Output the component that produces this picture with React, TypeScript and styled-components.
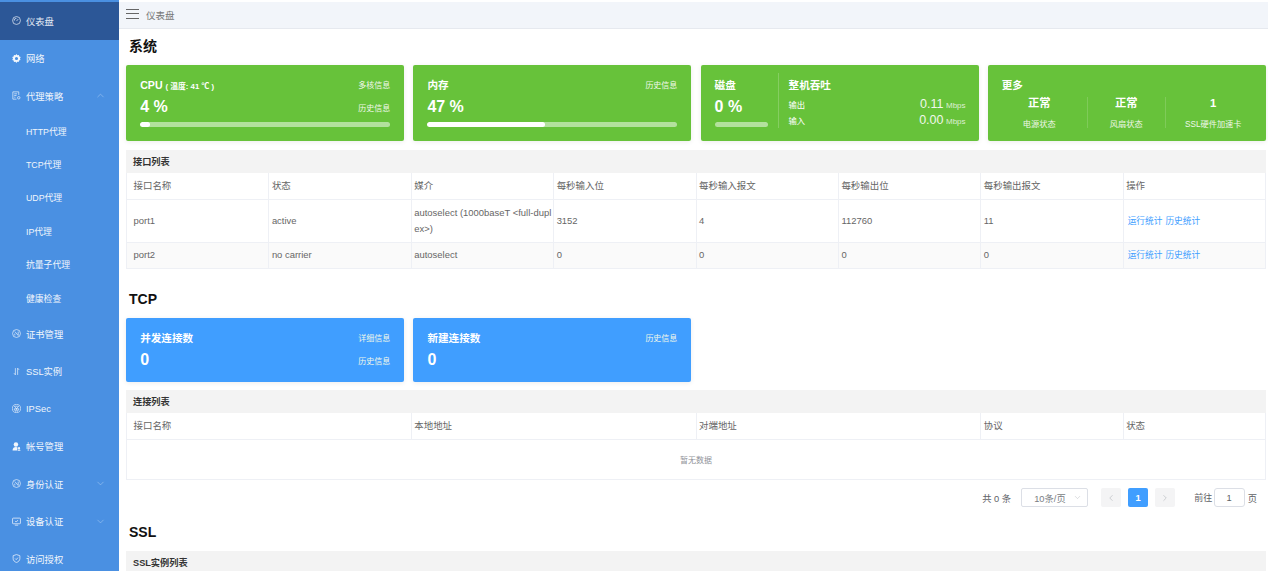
import React from 'react';
import styled, { createGlobalStyle } from 'styled-components';
import { ChevronDown, ChevronLeft, ChevronRight, ChevronUp } from 'lucide-react';

const GlobalStyle = createGlobalStyle`
  html, body {
    margin: 0;
    padding: 0;
    height: 571px;
    overflow: hidden;
    background: #fff;
    font-family: "Liberation Sans", "Noto Sans CJK SC", sans-serif;
  }
  * { box-sizing: border-box; }
`;

const Shell = styled.div`
  display: flex;
  width: 1268px;
  height: 571px;
  overflow: hidden;
`;

const Sidebar = styled.nav`
  flex: 0 0 119px;
  background: #4a90e2;
  color: #fff;
  display: flex;
  flex-direction: column;
  padding-top: 2px;
  overflow: hidden;
`;

const NavItem = styled.div<{ $active?: boolean }>`
  flex: 0 0 37.5px;
  display: flex;
  align-items: center;
  padding: 0 13px 0 12px;
  gap: 5px;
  font-size: 9.3px;
  background: ${(p) => (p.$active ? '#2c5797' : 'transparent')};
  color: ${(p) => (p.$active ? '#e4ebf5' : '#f1f6fc')};
  svg.lead { flex: 0 0 9px; width: 9px; height: 9px; }
`;

const NavLabel = styled.span`
  flex: 1;
`;

const SubItem = styled.div`
  flex: 0 0 33.4px;
  display: flex;
  align-items: center;
  padding-left: 26px;
  font-size: 8.8px;
  color: #f1f6fc;
`;

const Main = styled.main`
  flex: 1;
  min-width: 0;
  padding-top: 2px;
  overflow: hidden;
`;

const TopBar = styled.header`
  height: 27px;
  background: #f2f5fa;
  border-bottom: 1px solid #e6e9ef;
  display: flex;
  align-items: center;
  padding-left: 7px;
  gap: 7px;
  font-size: 9.5px;
  color: #777;
`;

const Burger = styled.div`
  width: 13px;
  height: 10px;
  border-top: 1.5px solid #666;
  border-bottom: 1.5px solid #666;
  position: relative;
  margin-top: -2px;
  &::after {
    content: '';
    position: absolute;
    left: 0;
    right: 0;
    top: 2.75px;
    border-top: 1.5px solid #666;
  }
`;

const Content = styled.div`
  padding: 0 2px 0 7px;
`;

const SectionTitle = styled.h2<{ $top: number; $bottom: number }>`
  margin: ${(p) => p.$top}px 0 ${(p) => p.$bottom}px 3px;
  height: 18px;
  line-height: 18px;
  font-size: 14px;
  font-weight: 700;
  color: #111;
`;

const CardRow = styled.div`
  display: grid;
  grid-template-columns: repeat(4, 278px);
  column-gap: 9.2px;
  padding-left: 0.2px;
`;

const Card = styled.div<{ $color: string; $height: number }>`
  background: ${(p) => p.$color};
  height: ${(p) => p.$height}px;
  border-radius: 2px;
  box-shadow: 0 1px 5px rgba(0, 0, 0, 0.08);
  color: #fff;
`;

const StatCard = styled(Card)`
  padding: 8px 14px;
  display: flex;
  flex-direction: column;
`;

const StatRow = styled.div`
  display: flex;
  justify-content: space-between;
  align-items: center;
  height: 23px;
`;

const StatHeading = styled.span`
  font-size: 10.6px;
  font-weight: 700;
`;

const Small = styled.span`
  font-size: 7.8px;
  font-weight: 700;
`;

const Big = styled.span`
  font-size: 16px;
  font-weight: 700;
  margin-top: -1px;
`;

const Link = styled.span`
  font-size: 8px;
  color: #f0f8ea;
`;

const Track = styled.div`
  margin-top: 3px;
  height: 5px;
  width: 100%;
  border-radius: 3px;
  background: rgba(255, 255, 255, 0.5);
  overflow: hidden;
`;

const Fill = styled.div<{ $percent: number }>`
  height: 100%;
  width: ${(p) => p.$percent}%;
  background: #fff;
  border-radius: 3px;
`;

const SplitCard = styled(Card)`
  display: flex;
  padding: 8px 13px 13px 14px;
`;

const DiskColumn = styled.div`
  flex: 0 0 64px;
  padding-right: 10px;
  display: flex;
  flex-direction: column;
  border-right: 1px solid rgba(255, 255, 255, 0.2);
`;

const ThroughputColumn = styled.div`
  flex: 1;
  padding-left: 10px;
`;

const ThroughputRow = styled.div`
  display: flex;
  justify-content: space-between;
  align-items: center;
  height: 16px;
  font-size: 8.3px;
`;

const Rate = styled.span`
  font-size: 12.5px;
  color: #f0f8ea;
  small { font-size: 8px; margin-left: 2.5px; opacity: 0.85; }
`;

const MoreCard = styled(Card)`
  padding: 8px 14px 0;
`;

const MoreHeading = styled(StatHeading)`
  display: block;
  height: 24px;
  line-height: 24px;
`;

const MoreGrid = styled.div`
  display: grid;
  grid-template-columns: 96px 78px 95px;
  margin-left: -10px;
`;

const MoreCell = styled.div`
  display: flex;
  flex-direction: column;
  align-items: center;
  height: 31px;
  border-right: 1px solid rgba(255, 255, 255, 0.16);
  &:last-child { border-right: none; }
  b { font-size: 11.3px; line-height: 13px; }
  span { font-size: 8.2px; line-height: 10px; margin-top: 10px; color: #eef7e8; }
`;

const TableBlock = styled.section<{ $top: number }>`
  margin-top: ${(p) => p.$top}px;
  width: 1140px;
`;

const TableTitle = styled.div`
  height: 23px;
  line-height: 24px;
  padding-left: 7px;
  background: #f3f3f3;
  font-size: 9.2px;
  font-weight: 700;
  color: #333;
`;

const Table = styled.table`
  width: 100%;
  border-collapse: collapse;
  table-layout: fixed;
  font-size: 9.45px;
  color: #666;
  border-left: 1px solid #eef0f5;
  border-right: 1px solid #eef0f5;
`;

const Column = styled.col<{ $width: string }>`
  width: ${(p) => p.$width};
`;

const Cell = styled.td<{ $height?: number }>`
  height: ${(p) => p.$height || 26}px;
  padding: 0 0 0 2.5px;
  border-right: 1px solid #eef0f5;
  border-bottom: 1px solid #eef0f5;
  line-height: 16px;
  word-break: break-all;
  &:first-child { padding-left: 6.5px; }
`;

const Row = styled.tr<{ $striped?: boolean }>`
  background: ${(p) => (p.$striped ? '#fafafa' : '#fff')};
`;

const LinkGroup = styled.div`
  display: flex;
  gap: 3px;
  margin-left: 1.5px;
`;

const TableLink = styled.a`
  color: #409eff;
  font-size: 8.7px;
`;

const Empty = styled.div`
  height: 40px;
  display: flex;
  align-items: center;
  justify-content: center;
  font-size: 8px;
  color: #909399;
  border: 1px solid #eef0f5;
  border-top: none;
`;

const Pagination = styled.div`
  display: flex;
  justify-content: flex-end;
  align-items: center;
  height: 19px;
  margin-top: 8px;
  padding-right: 9px;
  font-size: 9.3px;
  color: #606266;
`;

const PageSize = styled.div`
  width: 67px;
  height: 19px;
  margin: 0 13px 0 10px;
  border: 1px solid #dcdfe6;
  border-radius: 2px;
  display: flex;
  align-items: center;
  justify-content: space-between;
  padding: 0 5px 0 12px;
  color: #7a7d83;
  svg { color: #b4b7bd; }
`;

const PageButton = styled.div<{ $current?: boolean }>`
  width: 20px;
  height: 19px;
  margin-right: 7px;
  border-radius: 2px;
  display: flex;
  align-items: center;
  justify-content: center;
  font-weight: 700;
  background: ${(p) => (p.$current ? '#409eff' : '#f4f4f5')};
  color: ${(p) => (p.$current ? '#fff' : '#b0b3b9')};
`;

const GotoLabel = styled.span`
  margin-left: 12px;
  font-size: 9px;
`;

const Jump = styled.div`
  width: 31px;
  height: 19px;
  margin: 0 3px 0 1.5px;
  border: 1px solid #dcdfe6;
  border-radius: 3px;
  display: flex;
  align-items: center;
  justify-content: center;
`;

const Gauge = () => (
  <svg className="lead" viewBox="0 0 16 16" fill="none" stroke="currentColor" strokeWidth="1.3">
    <circle cx="8" cy="8" r="7" />
    <path d="M8 9l3-3.500M3.800 8.500a4.200 4.200 0 0 1 4.200-4.500" />
  </svg>
);

const Gear = () => (
  <svg className="lead" viewBox="0 0 16 16" fill="currentColor">
    <path
      fillRule="evenodd"
      d="M8 0l1.600 2.200 2.700-.5.6 2.700 2.600 1L14.200 8l.9 2.600-2.600 1-.6 2.700-2.700-.5L8 16l-1.800-2.200-2.700.5-.6-2.700-2.600-1L1.800 8 .3 5.400l2.600-1 .6-2.700 2.700.5L8 0zm0 5.200a2.800 2.800 0 1 0 0 5.600 2.800 2.800 0 0 0 0-5.600z"
    />
  </svg>
);

const Doc = () => (
  <svg className="lead" viewBox="0 0 16 16" fill="none" stroke="currentColor" strokeWidth="1.2">
    <path d="M12 7V1.500H1.500v13H8M4 5h5M4 8h4M4 11h2" />
    <circle cx="12" cy="12" r="2.200" />
  </svg>
);

const Seal = () => (
  <svg className="lead" viewBox="0 0 16 16" fill="none" stroke="currentColor" strokeWidth="1.2">
    <circle cx="8" cy="8" r="7" />
    <path d="M5 4.500l6 7M11 4.500v7M5 11.500V8" />
  </svg>
);

const Arrows = () => (
  <svg className="lead" viewBox="0 0 16 16" fill="none" stroke="currentColor" strokeWidth="1.200">
    <path d="M6 2v12M6 14l-2.500-3M10 14V2M10 2l2.500 3" />
  </svg>
);

const Fan = () => (
  <svg className="lead" viewBox="0 0 16 16" fill="none" stroke="currentColor" strokeWidth="1.100">
    <circle cx="8" cy="8" r="7.300" />
    <path d="M8 8L4 4h8L8 8zM8 8l-4.500.8 3 4.500zM8 8l4.500.8-3 4.500z" />
  </svg>
);

const People = () => (
  <svg className="lead" viewBox="0 0 16 16" fill="currentColor">
    <circle cx="7" cy="4.500" r="4" />
    <path d="M1 15c0-4 2.500-6 6-6 1.500 0 2.500.4 3 1l-1 5H1z" />
    <circle cx="12.500" cy="11" r="2" />
    <path d="M10 15.500c0-1.500 1-2 2.500-2s2.500.5 2.500 2z" />
  </svg>
);

const Screen = () => (
  <svg className="lead" viewBox="0 0 16 16" fill="none" stroke="currentColor" strokeWidth="1.300">
    <rect x="1" y="2" width="14" height="10" rx="1" />
    <path d="M5 14.500h6M5.500 7l2 2 3-3.500" />
  </svg>
);

const Shield = () => (
  <svg className="lead" viewBox="0 0 16 16" fill="none" stroke="currentColor" strokeWidth="1.300">
    <path d="M8 1l6 2v5c0 3.500-2.500 6-6 7-3.500-1-6-3.500-6-7V3l6-2z" />
    <path d="M5.500 8l2 2 3-3.500" />
  </svg>
);

const Down = () => <ChevronDown size={11} strokeWidth={1.2} color="#a9cbf2" />;
const Up = () => <ChevronUp size={11} strokeWidth={1.2} color="#a9cbf2" />;

const subItems = ['HTTP代理', 'TCP代理', 'UDP代理', 'IP代理', '抗量子代理', '健康检查'];
const portHeads = ['接口名称', '状态', '媒介', '每秒输入位', '每秒输入报文', '每秒输出位', '每秒输出报文', '操作'];
const connHeads = ['接口名称', '本地地址', '对端地址', '协议', '状态'];
const connWidths = ['25%', '25%', '25%', '12.5%', '12.5%'];

const PortLinks = () => (
  <LinkGroup>
    <TableLink>运行统计</TableLink>
    <TableLink>历史统计</TableLink>
  </LinkGroup>
);

const App: React.FC = () => {
  return (
    <Shell>
      <GlobalStyle />
      <Sidebar>
        <NavItem $active>
          <Gauge />
          <NavLabel>仪表盘</NavLabel>
        </NavItem>
        <NavItem>
          <Gear />
          <NavLabel>网络</NavLabel>
        </NavItem>
        <NavItem>
          <Doc />
          <NavLabel>代理策略</NavLabel>
          <Up />
        </NavItem>
        {subItems.map((s) => (
          <SubItem key={s}>{s}</SubItem>
        ))}
        <NavItem>
          <Seal />
          <NavLabel>证书管理</NavLabel>
        </NavItem>
        <NavItem>
          <Arrows />
          <NavLabel>SSL实例</NavLabel>
        </NavItem>
        <NavItem>
          <Fan />
          <NavLabel>IPSec</NavLabel>
        </NavItem>
        <NavItem>
          <People />
          <NavLabel>帐号管理</NavLabel>
        </NavItem>
        <NavItem>
          <Seal />
          <NavLabel>身份认证</NavLabel>
          <Down />
        </NavItem>
        <NavItem>
          <Screen />
          <NavLabel>设备认证</NavLabel>
          <Down />
        </NavItem>
        <NavItem>
          <Shield />
          <NavLabel>访问授权</NavLabel>
        </NavItem>
      </Sidebar>

      <Main>
        <TopBar>
          <Burger />
          <span>仪表盘</span>
        </TopBar>
        <Content>
          <SectionTitle $top={8} $bottom={10}>系统</SectionTitle>
          <CardRow>
            <StatCard $color="#67c23a" $height={76}>
              <StatRow>
                <StatHeading>
                  CPU <Small>( 温度: 41 ℃ )</Small>
                </StatHeading>
                <Link>多核信息</Link>
              </StatRow>
              <StatRow>
                <Big>4 %</Big>
                <Link>历史信息</Link>
              </StatRow>
              <Track>
                <Fill $percent={4} />
              </Track>
            </StatCard>
            <StatCard $color="#67c23a" $height={76}>
              <StatRow>
                <StatHeading>内存</StatHeading>
                <Link>历史信息</Link>
              </StatRow>
              <StatRow>
                <Big>47 %</Big>
              </StatRow>
              <Track>
                <Fill $percent={47} />
              </Track>
            </StatCard>
            <SplitCard $color="#67c23a" $height={76}>
              <DiskColumn>
                <StatRow>
                  <StatHeading>磁盘</StatHeading>
                </StatRow>
                <StatRow>
                  <Big>0 %</Big>
                </StatRow>
                <Track />
              </DiskColumn>
              <ThroughputColumn>
                <StatRow>
                  <StatHeading>整机吞吐</StatHeading>
                </StatRow>
                <ThroughputRow>
                  <span>输出</span>
                  <Rate>
                    0.11<small>Mbps</small>
                  </Rate>
                </ThroughputRow>
                <ThroughputRow>
                  <span>输入</span>
                  <Rate>
                    0.00<small>Mbps</small>
                  </Rate>
                </ThroughputRow>
              </ThroughputColumn>
            </SplitCard>
            <MoreCard $color="#67c23a" $height={76}>
              <MoreHeading>更多</MoreHeading>
              <MoreGrid>
                <MoreCell>
                  <b>正常</b>
                  <span>电源状态</span>
                </MoreCell>
                <MoreCell>
                  <b>正常</b>
                  <span>风扇状态</span>
                </MoreCell>
                <MoreCell>
                  <b>1</b>
                  <span>SSL硬件加速卡</span>
                </MoreCell>
              </MoreGrid>
            </MoreCard>
          </CardRow>

          <TableBlock $top={9}>
            <TableTitle>接口列表</TableTitle>
            <Table>
              <tbody>
                <Row>
                  {portHeads.map((h) => (
                    <Cell key={h}>{h}</Cell>
                  ))}
                </Row>
                <Row>
                  <Cell $height={43}>port1</Cell>
                  <Cell>active</Cell>
                  <Cell>autoselect (1000baseT &lt;full-duplex&gt;)</Cell>
                  <Cell>3152</Cell>
                  <Cell>4</Cell>
                  <Cell>112760</Cell>
                  <Cell>11</Cell>
                  <Cell>
                    <PortLinks />
                  </Cell>
                </Row>
                <Row $striped>
                  <Cell>port2</Cell>
                  <Cell>no carrier</Cell>
                  <Cell>autoselect</Cell>
                  <Cell>0</Cell>
                  <Cell>0</Cell>
                  <Cell>0</Cell>
                  <Cell>0</Cell>
                  <Cell>
                    <PortLinks />
                  </Cell>
                </Row>
              </tbody>
            </Table>
          </TableBlock>

          <SectionTitle $top={21} $bottom={10}>TCP</SectionTitle>
          <CardRow>
            <StatCard $color="#409eff" $height={64}>
              <StatRow>
                <StatHeading>并发连接数</StatHeading>
                <Link>详细信息</Link>
              </StatRow>
              <StatRow>
                <Big>0</Big>
                <Link>历史信息</Link>
              </StatRow>
            </StatCard>
            <StatCard $color="#409eff" $height={64}>
              <StatRow>
                <StatHeading>新建连接数</StatHeading>
                <Link>历史信息</Link>
              </StatRow>
              <StatRow>
                <Big>0</Big>
              </StatRow>
            </StatCard>
          </CardRow>

          <TableBlock $top={8}>
            <TableTitle>连接列表</TableTitle>
            <Table>
              <colgroup>
                {connWidths.map((w, i) => (
                  <Column key={i} $width={w} />
                ))}
              </colgroup>
              <tbody>
                <Row>
                  {connHeads.map((h) => (
                    <Cell key={h} $height={27}>{h}</Cell>
                  ))}
                </Row>
              </tbody>
            </Table>
            <Empty>暂无数据</Empty>
            <Pagination>
              <span>共 0 条</span>
              <PageSize>
                <span>10条/页</span>
                <ChevronDown size={9} strokeWidth={1.2} />
              </PageSize>
              <PageButton>
                <ChevronLeft size={10} strokeWidth={1.4} />
              </PageButton>
              <PageButton $current>1</PageButton>
              <PageButton>
                <ChevronRight size={10} strokeWidth={1.4} />
              </PageButton>
              <GotoLabel>前往</GotoLabel>
              <Jump>1</Jump>
              <span>页</span>
            </Pagination>
          </TableBlock>

          <SectionTitle $top={16} $bottom={10}>SSL</SectionTitle>
          <TableBlock $top={0}>
            <TableTitle>SSL实例列表</TableTitle>
          </TableBlock>
        </Content>
      </Main>
    </Shell>
  );
};

export default App;
